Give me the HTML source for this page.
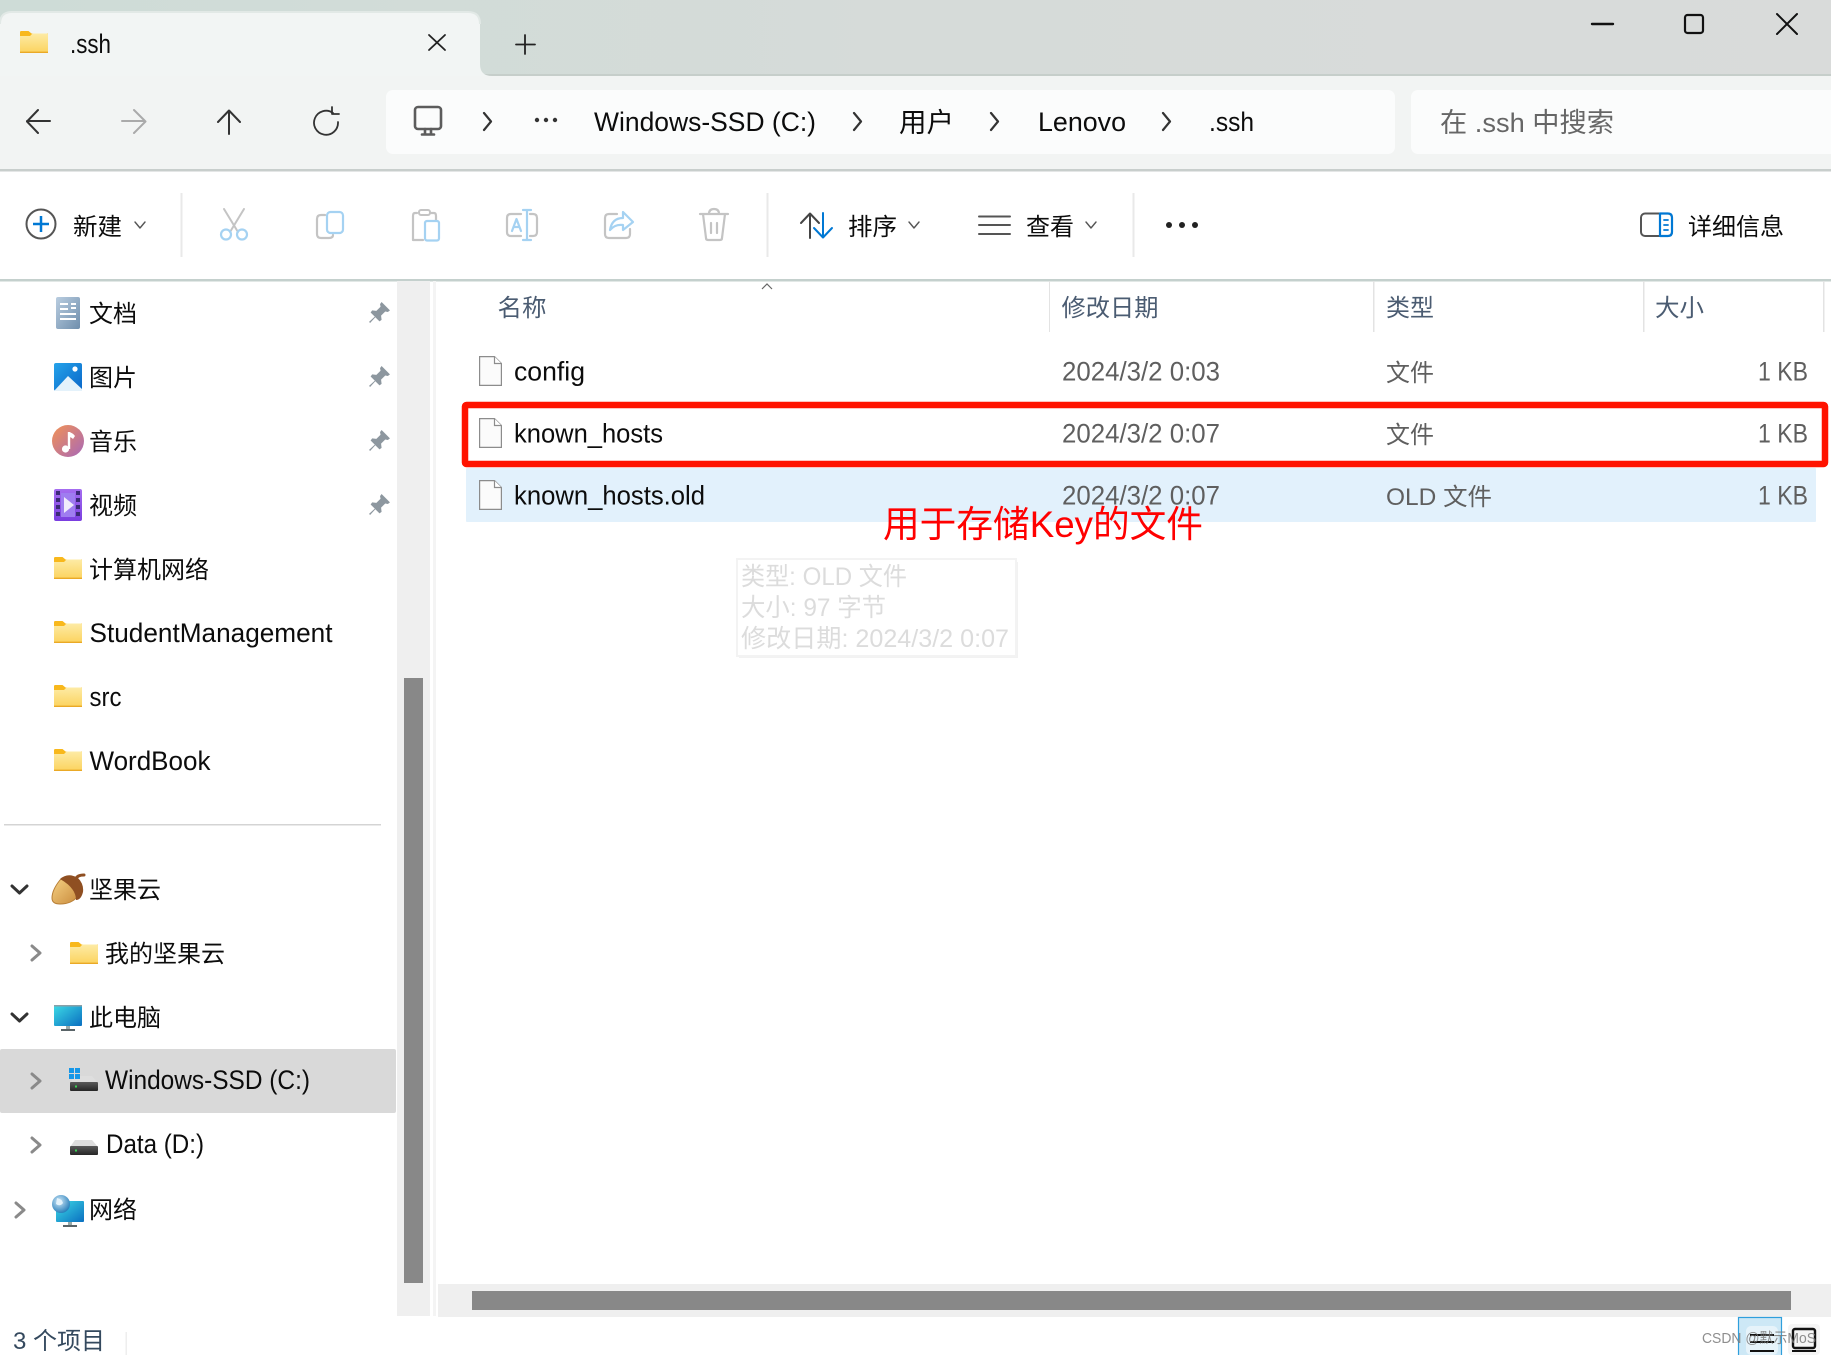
<!DOCTYPE html>
<html lang="zh"><head><meta charset="utf-8"><title>.ssh</title>
<style>
html,body{margin:0;padding:0;background:#fff;width:1831px;height:1355px;overflow:hidden}
svg{position:absolute;left:0;top:0;display:block}
text{font-family:"Liberation Sans","Noto Sans CJK SC",sans-serif;font-size:24px;fill:#0c0c0c}
.c{font-size:24px}
.n{font-size:27px}
.l{font-size:26.5px}
.g{fill:#5f5f5f}
.h{fill:#4b5c72;font-size:24px}
.t{fill:#dcdcdc;font-size:25px}
.i{fill:none;stroke-linecap:round;stroke-linejoin:round}
</style></head><body>
<svg width="1831" height="1355" viewBox="0 0 1831 1355" xmlns="http://www.w3.org/2000/svg" stroke-width="2">
<defs>
<linearGradient id="tb" x1="0" x2="1" y1="0" y2="0"><stop offset="0" stop-color="#cedcd7"/><stop offset=".5" stop-color="#d6dbd9"/><stop offset="1" stop-color="#d9dbda"/></linearGradient>
<linearGradient id="fo" x1="0" x2="0" y1="0" y2="1"><stop offset="0" stop-color="#fdeba5"/><stop offset="1" stop-color="#fcd35e"/></linearGradient>
<linearGradient id="doc" x1="0" x2="1" y1="0" y2="1"><stop offset="0" stop-color="#b9cde0"/><stop offset="1" stop-color="#6f8eac"/></linearGradient>
<linearGradient id="pic" x1="0" x2="1" y1="0" y2="1"><stop offset="0" stop-color="#25a3ea"/><stop offset="1" stop-color="#0a66c8"/></linearGradient>
<linearGradient id="mus" x1="0" x2="1" y1="0" y2="1"><stop offset="0" stop-color="#f29255"/><stop offset="1" stop-color="#a868b8"/></linearGradient>
<linearGradient id="vid" x1="0" x2="0" y1="0" y2="1"><stop offset="0" stop-color="#a56df0"/><stop offset="1" stop-color="#7a3ee0"/></linearGradient>
<linearGradient id="mon" x1="0" x2="1" y1="0" y2="1"><stop offset="0" stop-color="#3ddbe6"/><stop offset="1" stop-color="#0a6fc0"/></linearGradient>
<linearGradient id="drv" x1="0" x2="0" y1="0" y2="1"><stop offset="0" stop-color="#5a5a5a"/><stop offset="1" stop-color="#262626"/></linearGradient>
<linearGradient id="nut" x1="0" x2="1" y1="0" y2="1"><stop offset="0" stop-color="#f6d285"/><stop offset="1" stop-color="#c98b3c"/></linearGradient>
<radialGradient id="glb" cx=".4" cy=".35" r=".7"><stop offset="0" stop-color="#cfe8f7"/><stop offset="1" stop-color="#1f79b8"/></radialGradient>
<symbol id="fd" viewBox="0 0 28 22" overflow="visible">
<path d="M0 1.2Q0 0 1.2 0H8.5L11.5 2.5H28V8H0Z" fill="#f8b81c"/>
<path d="M0 5H10L12.5 2.5H27Q28 2.5 28 3.5V21Q28 22 27 22H1Q0 22 0 21Z" fill="url(#fo)"/>
<path d="M0 21.3H28" stroke="#eaa926" stroke-width="1.4"/>
</symbol>
<symbol id="fl" viewBox="0 0 23 30" overflow="visible">
<path d="M.6.6H15.5L22.4 7.5V29.4H.6Z" fill="#fbfbfb" stroke="#8c8c8c" stroke-width="1.2"/>
<path d="M15.5.6V7.5H22.4" fill="#fff" stroke="#8c8c8c" stroke-width="1.2"/>
</symbol>
<symbol id="pn" viewBox="0 0 22 22" overflow="visible">
<path d="M13 1L21 9L19 10.5L16.5 10L12.5 14L13 18L11 19.5L7 15.5L2 21L1 20L6.5 15L2.5 11L4 9L8 9.5L12 5.500L11.500 3Z" fill="#8d979f"/>
</symbol>
<symbol id="dr" viewBox="0 0 28 15" overflow="visible">
<path d="M5 0H22L28 7H0Z" fill="#dedede"/>
<rect x="0" y="6" width="28" height="9" rx="1" fill="url(#drv)"/>
<rect x="5" y="9.500" width="2" height="2" fill="#39d353"/>
</symbol>
</defs>

<!-- title bar -->
<rect width="1831" height="75" fill="url(#tb)"/>
<rect y="74" width="1831" height="2" fill="#c6ceca"/>
<rect y="76" width="1831" height="94" fill="#f2f4f3"/>
<path d="M0 76V24Q0 12 12 12H468Q480 12 480 24V64Q480 76 492 76Z" fill="#f2f5f4"/>
<path d="M0 24Q0 12 12 12H468Q480 12 480 24" fill="none" stroke="#e2e9e6" stroke-width="2"/>
<use href="#fd" x="20" y="31" width="28" height="22"/>
<text class="n" x="70" y="53" textLength="41" lengthAdjust="spacingAndGlyphs">.ssh</text>
<g class="i" stroke="#222"><path d="M429 35L445 50M445 35L429 50" stroke-width="1.8"/><path d="M525 35V54M516 44.500H535" stroke-width="1.8"/></g>
<g class="i" stroke="#111"><path d="M1592 24H1613" stroke-width="2.400"/><rect x="1685" y="15" width="18" height="18" rx="2.500" stroke-width="2.200"/><path d="M1777 14L1797 34M1797 14L1777 34" stroke-width="2"/></g>

<!-- nav bar -->
<rect x="386" y="90" width="1009" height="64" rx="7" fill="#fbfcfc"/>
<rect x="1411" y="90" width="430" height="64" rx="7" fill="#fbfcfc"/>
<rect y="169" width="1831" height="2.500" fill="#c8cecc"/>
<g class="i" stroke="#333"><path d="M50 121H27M38 110L27 121.500L38 133"/><path d="M122 121H145M134 110L145.500 121.500L134 133" stroke="#aaa"/><path d="M229 134V111M218 122L229 110.500L240 122"/><path d="M333 113A12 12 0 1 0 338 122M332 107V114H339" stroke-width="1.8"/>
<g stroke="#5c5c5c" stroke-width="2.600"><rect x="415" y="107" width="26" height="22" rx="3"/><path d="M422 134.500H434M425 129V134M431 129V134"/></g>
<path d="M484 113L491 121.500L484 130M854 113L861 121.500L854 130M991 113L998 121.500L991 130M1163 113L1170 121.500L1163 130" stroke-width="2.200"/></g>
<g fill="#333"><circle cx="537" cy="120" r="2.200"/><circle cx="546" cy="120" r="2.200"/><circle cx="555" cy="120" r="2.200"/></g>
<text class="n" x="594" y="131" textLength="222" lengthAdjust="spacingAndGlyphs">Windows-SSD (C:)</text>
<text class="n" x="899" y="132" textLength="55" lengthAdjust="spacingAndGlyphs">用户</text>
<text class="n" x="1038" y="131" textLength="88" lengthAdjust="spacingAndGlyphs">Lenovo</text>
<text class="n" x="1209" y="131" textLength="45" lengthAdjust="spacingAndGlyphs">.ssh</text>
<text class="n" x="1440" y="132" textLength="174" lengthAdjust="spacingAndGlyphs" style="fill:#666">在 .ssh 中搜索</text>

<!-- toolbar -->
<rect y="279" width="1831" height="2.500" fill="#c4d0cd"/>
<circle cx="41" cy="224" r="14.500" fill="none" stroke="#555" stroke-width="2"/>
<path d="M41 216V232M33 224H49" stroke="#0078d4" stroke-width="2.500"/>
<text class="c" x="73" y="235" textLength="49" lengthAdjust="spacingAndGlyphs">新建</text>
<g class="i" stroke="#555" stroke-width="1.400"><path d="M135 222L140 228L145 222M909 222L914 228L919 222M1086 222L1091 228L1096 222"/></g>
<rect x="180.500" y="193" width="2" height="64" fill="#e9e9e9"/><rect x="766.500" y="193" width="2" height="64" fill="#e9e9e9"/><rect x="1132.500" y="193" width="2" height="64" fill="#e9e9e9"/>
<g class="i">
<path d="M224 209L238 232M244 209L230 232" stroke="#c4c4c4"/>
<circle cx="226" cy="234.500" r="5" stroke="#a5d2f2" stroke-width="2.200"/><circle cx="242" cy="234.500" r="5" stroke="#a5d2f2" stroke-width="2.200"/>
<path d="M325 215H321Q317 215 317 219V234Q317 238 321 238H329Q333 238 333 235" stroke="#c4c4c4" stroke-width="2.200"/>
<rect x="327" y="212" width="16" height="21" rx="3.500" stroke="#a5d2f2" stroke-width="2.200"/>
<path d="M417 213H415Q413 213 413 216V240H423M431 213H434Q436 213 436 216V220" stroke="#c4c4c4" stroke-width="2.200"/>
<rect x="419" y="210" width="11" height="5" rx="2" stroke="#c4c4c4" stroke-width="2"/>
<rect x="425" y="221" width="14" height="19.500" rx="2" stroke="#a5d2f2" stroke-width="2.200"/>
<path d="M521 214H511Q507 214 507 218V232Q507 236 511 236H521M530 214H533Q537 214 537 218V232Q537 236 533 236H530" stroke="#c4c4c4" stroke-width="2.200"/>
<path d="M527 210V240M523 210H531M523 240H531M512 231L516.500 219L521 231M513.500 227H519.500" stroke="#a5d2f2" stroke-width="2.200"/>
<path d="M617 214H609Q605 214 605 218V234Q605 238 609 238H626Q630 238 630 234V229" stroke="#c4c4c4" stroke-width="2.200"/>
<path d="M623 212L633 222L623 230V225Q615 224 610 230Q612 218 623 218Z" stroke="#a5d2f2" stroke-width="2.200"/>
<g stroke="#c4c4c4" stroke-width="2.200"><path d="M700 214H728M703 214L706 238Q706 240 708 240H720Q722 240 722 238L725 214M709 214Q709 209 714 209Q719 209 719 214M711 223V233M717 223V233"/></g>
<path d="M810 238V214M801 223L810 213.500L819 223" stroke="#444" stroke-width="2"/>
<path d="M823 213V237M814 228L823 237.500L832 228" stroke="#0078d4" stroke-width="2"/>
<path d="M979 216.500H1010M979 225H1010M979 234H1010" stroke="#555" stroke-width="2"/>
<rect x="1641" y="213.500" width="31" height="22.500" rx="4" stroke="#555" stroke-width="2"/>
<path d="M1660 213.500H1668Q1672 213.500 1672 217.500V232Q1672 236 1668 236H1660Z" stroke="#0078d4" stroke-width="2.200"/>
<path d="M1664 220H1668M1664 225H1668M1664 230H1668" stroke="#0078d4" stroke-width="1.800"/>
</g>
<text class="c" x="848" y="235" textLength="49" lengthAdjust="spacingAndGlyphs">排序</text>
<text class="c" x="1026" y="235" textLength="48" lengthAdjust="spacingAndGlyphs">查看</text>
<g fill="#222"><circle cx="1169" cy="225" r="3"/><circle cx="1182" cy="225" r="3"/><circle cx="1195" cy="225" r="3"/></g>
<text class="c" x="1688" y="235" textLength="96" lengthAdjust="spacingAndGlyphs">详细信息</text>

<!-- sidebar -->
<rect x="397" y="281" width="33" height="1035" fill="#efefef"/>
<rect x="404" y="678" width="19" height="605" fill="#888"/>
<rect x="433" y="281" width="3" height="1035" fill="#f4f4f4"/>
<rect x="56" y="297" width="24" height="32" rx="2" fill="url(#doc)"/>
<path d="M60 304H68M71 304H76M60 309H68M71 308H76M60 314H76M60 319H76" stroke="#fff" stroke-width="2"/>
<rect x="54" y="363" width="28" height="28" rx="2" fill="url(#pic)"/>
<path d="M54 391L68 376L82 389V391Z" fill="#e4f2fb"/>
<circle cx="75" cy="369" r="2.600" fill="#fff"/>
<circle cx="68" cy="441" r="16" fill="url(#mus)"/>
<path d="M69 432V449" stroke="#fff" stroke-width="2.400"/><path d="M69 432Q73 433 75 436L73 439Q71 437 69 437Z" fill="#fff"/><circle cx="65.500" cy="449" r="3.600" fill="#fff"/>
<rect x="54" y="489" width="28" height="32" rx="2" fill="url(#vid)"/>
<rect x="61" y="493" width="14" height="24" fill="#9f7df0"/>
<g fill="#3c2a78"><rect x="56" y="491" width="4" height="4"/><rect x="56" y="498" width="4" height="4"/><rect x="56" y="505" width="4" height="4"/><rect x="56" y="512" width="4" height="4"/><rect x="76" y="491" width="4" height="4"/><rect x="76" y="498" width="4" height="4"/><rect x="76" y="505" width="4" height="4"/><rect x="76" y="512" width="4" height="4"/></g>
<path d="M64 497L74 505L64 513Z" fill="#f0ecfb"/>
<use href="#fd" x="54" y="557" width="28" height="22"/>
<use href="#fd" x="54" y="621" width="28" height="22"/>
<use href="#fd" x="54" y="685" width="28" height="22"/>
<use href="#fd" x="54" y="749" width="28" height="22"/>
<use href="#pn" x="368" y="301" width="23" height="23"/>
<use href="#pn" x="368" y="365" width="23" height="23"/>
<use href="#pn" x="368" y="429" width="23" height="23"/>
<use href="#pn" x="368" y="493" width="23" height="23"/>
<text x="89" y="322" textLength="48" lengthAdjust="spacingAndGlyphs">文档</text>
<text x="89" y="386" textLength="48" lengthAdjust="spacingAndGlyphs">图片</text>
<text x="89" y="450" textLength="48" lengthAdjust="spacingAndGlyphs">音乐</text>
<text x="89" y="514" textLength="48" lengthAdjust="spacingAndGlyphs">视频</text>
<text x="89" y="578" textLength="120" lengthAdjust="spacingAndGlyphs">计算机网络</text>
<text class="l" x="89.500" y="642" textLength="243" lengthAdjust="spacingAndGlyphs">StudentManagement</text>
<text class="l" x="89.500" y="706" textLength="32" lengthAdjust="spacingAndGlyphs">src</text>
<text class="l" x="89.500" y="770" textLength="121" lengthAdjust="spacingAndGlyphs">WordBook</text>
<rect x="4" y="824" width="377" height="1.500" fill="#d4d4d4"/>
<rect x="0" y="1049" width="396" height="64" rx="2" fill="#d9d9d9"/>
<g class="i" stroke-width="3"><path d="M12 886L19.500 893L27 886M12 1014L19.500 1021L27 1014" stroke="#333"/><path d="M32 946L40 953L32 960M32 1074L40 1081L32 1088M32 1138L40 1145L32 1152M16 1203L24 1210L16 1217" stroke="#8a8a8a"/></g>
<path d="M60 880Q52 890 52 898Q52 904 60 904Q72 904 78 896L74 884Q66 875 60 880Z" fill="url(#nut)" stroke="#b87f36" stroke-width="1"/>
<path d="M60 879Q68 872 78 878Q84 884 83 892Q81 900 76 900Q76 888 60 879Z" fill="#8f4f22"/>
<path d="M76 879Q77 875 84 875" fill="none" stroke="#8f4f22" stroke-width="3" stroke-linecap="round"/>
<text x="89" y="898" textLength="72" lengthAdjust="spacingAndGlyphs">坚果云</text>
<use href="#fd" x="70" y="942" width="28" height="22"/>
<text x="105" y="962" textLength="120" lengthAdjust="spacingAndGlyphs">我的坚果云</text>
<rect x="54" y="1005" width="28" height="21" rx="1" fill="url(#mon)"/><path d="M54 1005H82V1006.500H54Z" fill="#8aa0a8"/>
<rect x="66" y="1026" width="4" height="3" fill="#9aa"/><rect x="61" y="1029" width="14" height="2" fill="#5a6468"/>
<text x="89" y="1026" textLength="72" lengthAdjust="spacingAndGlyphs">此电脑</text>
<use href="#dr" x="70" y="1076" width="28" height="15"/>
<g fill="#1597e8"><rect x="69" y="1068" width="5" height="5"/><rect x="75" y="1068" width="5" height="5"/><rect x="69" y="1074" width="5" height="5"/><rect x="75" y="1074" width="5" height="5"/></g>
<text class="l" x="105" y="1089" textLength="205" lengthAdjust="spacingAndGlyphs">Windows-SSD (C:)</text>
<use href="#dr" x="70" y="1140" width="28" height="15"/>
<text class="l" x="106" y="1153" textLength="98" lengthAdjust="spacingAndGlyphs">Data (D:)</text>
<rect x="56" y="1201" width="28" height="21" rx="1" fill="url(#mon)"/>
<rect x="68" y="1222" width="4" height="3" fill="#9aa"/><rect x="63" y="1225" width="14" height="2" fill="#5a6468"/>
<circle cx="61" cy="1204" r="9" fill="url(#glb)"/>
<path d="M57 1198Q62 1199 63 1203Q60 1207 56 1204Z" fill="#e3f2fb"/>
<text x="89" y="1218" textLength="48" lengthAdjust="spacingAndGlyphs">网络</text>

<!-- header -->
<path d="M762 289L767 284L772 289" fill="none" stroke="#666" stroke-width="1.200"/>
<g fill="#e3e3e3"><rect x="1049" y="281" width="1" height="51"/><rect x="1373" y="281" width="1.500" height="51"/><rect x="1643" y="281" width="1.500" height="51"/><rect x="1823" y="281" width="1.500" height="51"/></g>
<text class="h" x="497.500" y="316" textLength="49" lengthAdjust="spacingAndGlyphs">名称</text>
<text class="h" x="1061.500" y="316" textLength="97" lengthAdjust="spacingAndGlyphs">修改日期</text>
<text class="h" x="1386" y="316" textLength="48" lengthAdjust="spacingAndGlyphs">类型</text>
<text class="h" x="1655" y="316" textLength="49" lengthAdjust="spacingAndGlyphs">大小</text>

<!-- rows -->
<rect x="466" y="468" width="1350" height="54" rx="1" fill="#e2f1fc"/>
<use href="#fl" x="479" y="356" width="23" height="30"/>
<use href="#fl" x="479" y="418" width="23" height="30"/>
<use href="#fl" x="479" y="480" width="23" height="30"/>
<text class="l" x="514" y="380.500" textLength="71" lengthAdjust="spacingAndGlyphs">config</text>
<text class="l" x="514" y="442.500" textLength="149" lengthAdjust="spacingAndGlyphs">known_hosts</text>
<text class="l" x="514" y="504.500" textLength="191" lengthAdjust="spacingAndGlyphs">known_hosts.old</text>
<text class="g l" x="1062" y="380.500" textLength="158" lengthAdjust="spacingAndGlyphs">2024/3/2 0:03</text>
<text class="g l" x="1062" y="442.500" textLength="158" lengthAdjust="spacingAndGlyphs">2024/3/2 0:07</text>
<text class="g l" x="1062" y="504.500" textLength="158" lengthAdjust="spacingAndGlyphs">2024/3/2 0:07</text>
<text class="g" x="1386" y="381" textLength="48" lengthAdjust="spacingAndGlyphs">文件</text>
<text class="g" x="1386" y="443" textLength="48" lengthAdjust="spacingAndGlyphs">文件</text>
<text class="g" x="1386" y="505" textLength="106" lengthAdjust="spacingAndGlyphs">OLD 文件</text>
<text class="g l" x="1758" y="380.500" textLength="50" lengthAdjust="spacingAndGlyphs">1 KB</text>
<text class="g l" x="1758" y="442.500" textLength="50" lengthAdjust="spacingAndGlyphs">1 KB</text>
<text class="g l" x="1758" y="504.500" textLength="50" lengthAdjust="spacingAndGlyphs">1 KB</text>
<rect x="465" y="405" width="1360" height="59" rx="1.500" fill="none" stroke="#ff1300" stroke-width="6.500"/>
<text x="883" y="537" textLength="320" lengthAdjust="spacingAndGlyphs" style="font-size:37px;fill:#f00">用于存储Key的文件</text>

<!-- tooltip -->
<rect x="739" y="562" width="279" height="96" fill="#ececec" opacity=".7"/>
<rect x="737" y="559" width="279" height="97" fill="#fff" stroke="#f3f3f3"/>
<text class="t" x="741" y="585" textLength="166" lengthAdjust="spacingAndGlyphs">类型: OLD 文件</text>
<text class="t" x="741" y="616" textLength="145" lengthAdjust="spacingAndGlyphs">大小: 97 字节</text>
<text class="t" x="741" y="647" textLength="268" lengthAdjust="spacingAndGlyphs">修改日期: 2024/3/2 0:07</text>

<!-- h scrollbar -->
<rect x="438" y="1284" width="1393" height="33" fill="#efefef"/>
<rect x="472" y="1291" width="1319" height="19" fill="#888"/>

<!-- status -->
<text x="13" y="1349" textLength="92" lengthAdjust="spacingAndGlyphs" style="fill:#34495e">3 个项目</text>
<rect x="125.500" y="1332" width="1.500" height="23" fill="#eee"/>
<rect x="1738.500" y="1317.500" width="43" height="40" fill="#cde8f6" stroke="#2f9fdc" stroke-width="1.200"/>
<rect x="1746" y="1326" width="32" height="29" rx="5" fill="#e6f3fa"/>
<path d="M1750 1335H1774M1750 1342H1774M1750 1351H1774" stroke="#111" stroke-width="2"/>
<rect x="1788" y="1324" width="32" height="31" rx="4" fill="#f5f5f5"/>
<rect x="1793" y="1329" width="22" height="19" rx="2" fill="none" stroke="#111" stroke-width="2.400"/>
<path d="M1792 1351H1816" stroke="#111" stroke-width="2"/>
<text x="1702" y="1343" textLength="114" lengthAdjust="spacingAndGlyphs" style="font-size:14.500px;fill:#7b7b7b;opacity:.85">CSDN @默示MoS</text>
</svg>
</body></html>
